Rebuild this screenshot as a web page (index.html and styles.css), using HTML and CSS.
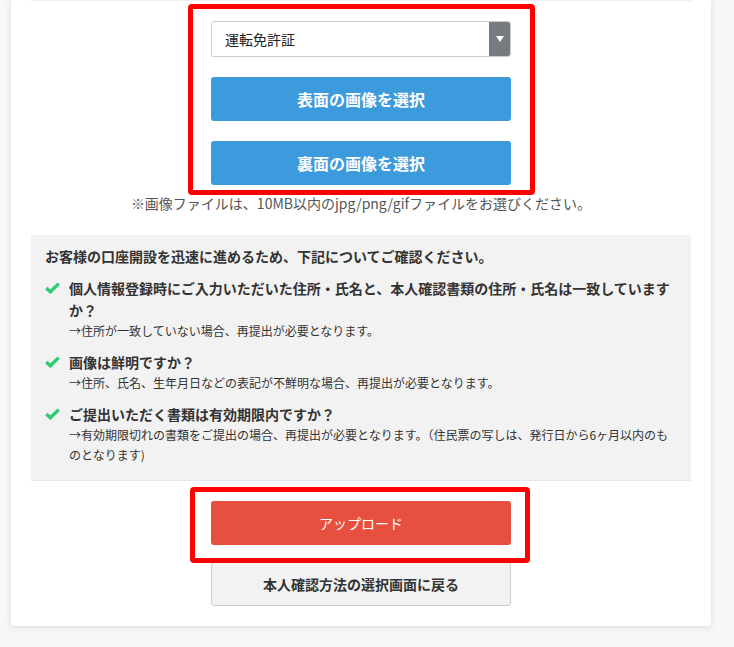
FILE: index.html
```html
<!DOCTYPE html>
<html lang="ja">
<head>
    <meta charset="UTF-8">
    <meta name="viewport" content="width=device-width, initial-scale=1.0">
    <title>本人確認書類のアップロード</title>
    <link rel="stylesheet" href="styles.css">
</head>
<body>
    <div class="card">
        <div class="upload-area">
            <div class="select-box">
                <select class="doc-select">
                    <option>運転免許証</option>
                    <option>パスポート</option>
                    <option>マイナンバーカード</option>
                </select>
                <span class="select-arrow"></span>
            </div>
            <button class="pick-btn">表面の画像を選択</button>
            <button class="pick-btn">裏面の画像を選択</button>
        </div>
        <p class="file-note">※画像ファイルは、10MB以内のjpg/png/gifファイルをお選びください。</p>

        <div class="check-box">
            <p class="check-lead">お客様の口座開設を迅速に進めるため、下記についてご確認ください。</p>
            <ul class="check-list">
                <li>
                    <svg class="check-icon" viewBox="0 0 14 11"><path d="M1.2 5.4 L5 9 L12.8 1.4" /></svg>
                    <div>
                        <p class="check-title">個人情報登録時にご入力いただいた住所・氏名と、本人確認書類の住所・氏名は一致していますか？</p>
                        <p class="check-sub">→住所が一致していない場合、再提出が必要となります。</p>
                    </div>
                </li>
                <li>
                    <svg class="check-icon" viewBox="0 0 14 11"><path d="M1.2 5.4 L5 9 L12.8 1.4" /></svg>
                    <div>
                        <p class="check-title">画像は鮮明ですか？</p>
                        <p class="check-sub">→住所、氏名、生年月日などの表記が不鮮明な場合、再提出が必要となります。</p>
                    </div>
                </li>
                <li>
                    <svg class="check-icon" viewBox="0 0 14 11"><path d="M1.2 5.4 L5 9 L12.8 1.4" /></svg>
                    <div>
                        <p class="check-title">ご提出いただく書類は有効期限内ですか？</p>
                        <p class="check-sub">→有効期限切れの書類をご提出の場合、再提出が必要となります。（住民票の写しは、発行日から6ヶ月以内のものとなります)</p>
                    </div>
                </li>
            </ul>
        </div>

        <div class="actions">
            <button class="upload-btn">アップロード</button>
            <button class="back-btn">本人確認方法の選択画面に戻る</button>
        </div>
    </div>

    <div class="mark mark-top"></div>
    <div class="mark mark-bottom"></div>
</body>
</html>
```

FILE: styles.css
```css
* {
    margin: 0;
    padding: 0;
    box-sizing: border-box;
    font-family: 'Noto Sans CJK JP', 'Noto Sans', sans-serif;
}

body {
    background: #f6f7f9;
    color: #333;
    position: relative;
    min-height: 647px;
}

.card {
    width: 700px;
    margin-left: 11px;
    background: #fff;
    padding: 0 20px 20px;
    border-radius: 0 0 3px 3px;
    box-shadow: 0 1px 6px rgba(0, 0, 0, 0.12);
}

.card::before {
    content: "";
    display: block;
    height: 1px;
    background: #eeeeee;
}

.upload-area {
    width: 300px;
    margin: 0 auto;
    padding-top: 20px;
    display: flex;
    flex-direction: column;
    gap: 20px;
}

.select-box {
    display: flex;
    height: 36px;
    border: 1px solid #ccc;
    border-radius: 3px;
    overflow: hidden;
}

.doc-select {
    flex: 1;
    appearance: none;
    -webkit-appearance: none;
    border: none;
    background: #fff;
    padding-left: 13px;
    font-size: 14px;
    color: #222;
    outline: none;
}

.select-arrow {
    width: 21px;
    background: #767b82;
    display: flex;
    align-items: center;
    justify-content: center;
}

.select-arrow::after {
    content: "";
    border-left: 4px solid transparent;
    border-right: 4px solid transparent;
    border-top: 6px solid #fff;
}

.pick-btn {
    height: 44px;
    border: none;
    border-radius: 3px;
    background: #3c9bdc;
    color: #fff;
    font-size: 16px;
    font-weight: bold;
    cursor: pointer;
}

.file-note {
    text-align: center;
    font-size: 14px;
    color: #555;
    line-height: 20px;
    margin-top: 8px;
}

.check-box {
    margin-top: 22px;
    background: #f2f2f2;
    border-bottom: 1px solid #e6e6e6;
    padding: 11px 14px 15px;
}

.check-lead {
    font-size: 14px;
    font-weight: bold;
    line-height: 20px;
    color: #333;
}

.check-list {
    list-style: none;
}

.check-list li {
    display: flex;
    gap: 9px;
    margin-top: 10px;
}

.check-list li:first-child {
    margin-top: 11px;
}

.check-icon {
    flex: none;
    width: 15px;
    height: 12px;
    margin-top: 5px;
    fill: none;
    stroke: #2ecc71;
    stroke-width: 3.2;
}

.check-title {
    font-size: 14px;
    font-weight: bold;
    line-height: 22px;
    color: #333;
}

.check-sub {
    font-size: 12px;
    line-height: 20px;
    color: #333;
}

.actions {
    display: flex;
    flex-direction: column;
    align-items: center;
    gap: 17px;
    padding-top: 20px;
}

.upload-btn,
.back-btn {
    width: 300px;
    height: 44px;
    border-radius: 3px;
    font-size: 14px;
    cursor: pointer;
}

.upload-btn {
    border: none;
    background: #e74f3f;
    color: #fff;
}

.back-btn {
    background: #f2f2f2;
    border: 1px solid #ccc;
    color: #333;
    font-weight: bold;
}

.mark {
    position: absolute;
    border: 5px solid #ff0000;
    border-radius: 4px;
    pointer-events: none;
}

.mark-top {
    left: 188px;
    top: 4px;
    width: 347px;
    height: 191px;
}

.mark-bottom {
    left: 190px;
    top: 487px;
    width: 340px;
    height: 76px;
}
```
